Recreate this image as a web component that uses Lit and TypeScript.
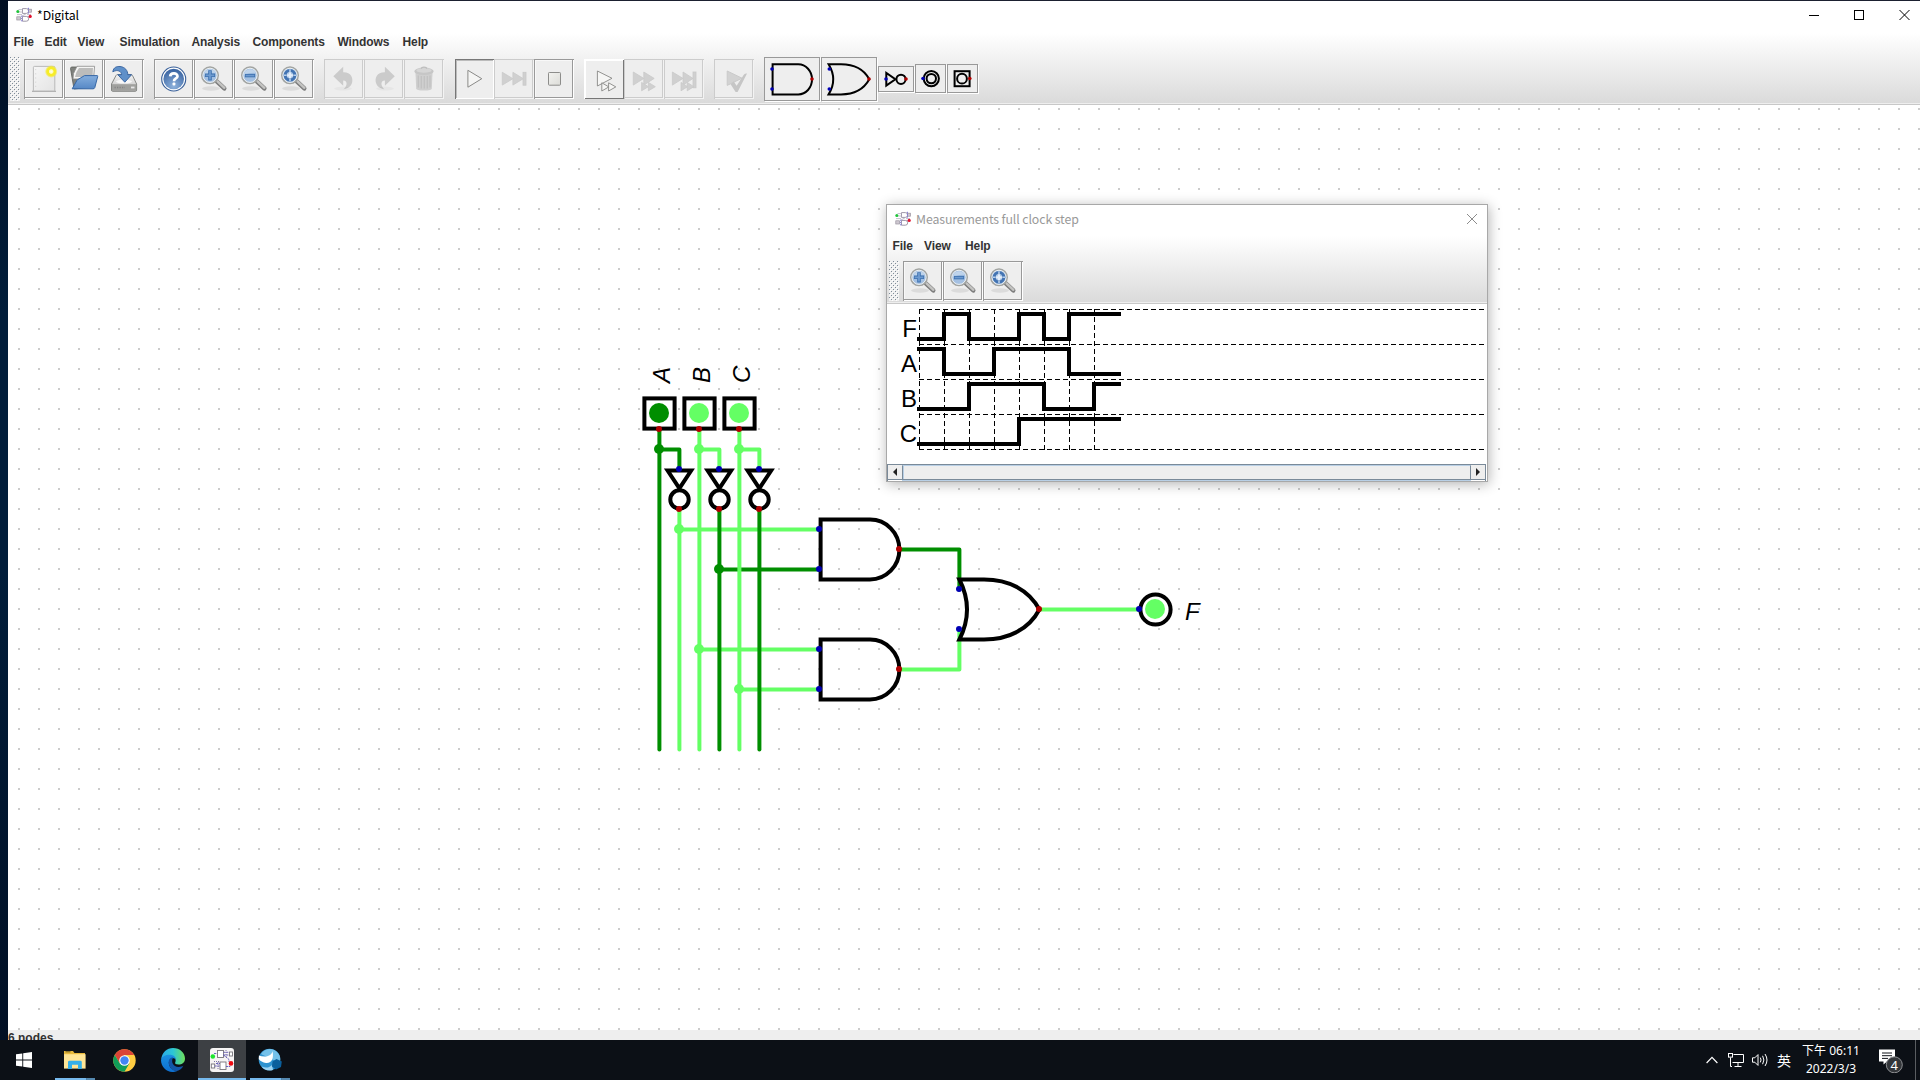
import { LitElement, html, svg, css, TemplateResult, SVGTemplateResult } from "lit";
import { customElement, property } from "lit/decorators.js";

type Menu = { label: string; width: number };
type Tool = { icon: string; state?: "disabled" | "pressed" | "raised" };

const MAIN_MENU: Menu[] = [
  { label: "File", width: 31 },
  { label: "Edit", width: 33 },
  { label: "View", width: 42 },
  { label: "Simulation", width: 72 },
  { label: "Analysis", width: 61 },
  { label: "Components", width: 85 },
  { label: "Windows", width: 65 },
  { label: "Help", width: 30 },
];

const MEASURE_MENU: Menu[] = [
  { label: "File", width: 31.5 },
  { label: "View", width: 41 },
  { label: "Help", width: 30 },
];

const TOOL_GROUPS: Tool[][] = [
  [{ icon: "new" }, { icon: "open" }, { icon: "save" }],
  [{ icon: "help" }, { icon: "zoomIn" }, { icon: "zoomOut" }, { icon: "zoomFit" }],
  [
    { icon: "undo", state: "disabled" },
    { icon: "redo", state: "disabled" },
    { icon: "trash", state: "disabled" },
  ],
  [{ icon: "play", state: "pressed" }, { icon: "skip", state: "disabled" }, { icon: "stop" }],
  [
    { icon: "step", state: "raised" },
    { icon: "fast", state: "disabled" },
    { icon: "fastEnd", state: "disabled" },
  ],
  [{ icon: "check", state: "disabled" }],
];

const magnifier = (mark: SVGTemplateResult) => svg`
  <ellipse cx="17" cy="29.5" rx="9" ry="2.2" fill="#000" opacity=".08"></ellipse>
  <path d="M22.5 22.2 L30.3 29.4" stroke="#7e7e7e" stroke-width="4.4" stroke-linecap="round"></path>
  <path d="M23.5 22.3 L30.4 28.8" stroke="#c4c4c2" stroke-width="2.4" stroke-linecap="round"></path>
  <circle cx="16" cy="16.3" r="8.2" fill="#a4c0e2" stroke="#a2a4a1" stroke-width="1.6"></circle>
  <circle cx="16" cy="16.3" r="7.1" fill="none" stroke="#eef1f2" stroke-width="1"></circle>
  <path d="M9.8 15 A6.5 6.5 0 0 1 22 14 Q15 13 9.8 17Z" fill="#c5d8ee" opacity=".8"></path>
  ${mark}`;

const ICONS: Record<string, SVGTemplateResult> = {
  new: svg`
    <defs>
      <linearGradient id="pg" x1="0" y1="0" x2="1" y2="1"><stop offset="0" stop-color="#f6f6f6"/><stop offset="1" stop-color="#e4e4e4"/></linearGradient>
      <radialGradient id="sun"><stop offset="0" stop-color="#fffef0"/><stop offset=".3" stop-color="#fffbb0"/><stop offset=".42" stop-color="#f8ee20"/><stop offset=".7" stop-color="#f5ea30"/><stop offset="1" stop-color="#f5ea30" stop-opacity="0"/></radialGradient>
    </defs>
    <path d="M8 32.3H32" stroke="#000" opacity=".25" stroke-width="1.4"></path>
    <rect x="9.4" y="7.4" width="21.4" height="24.6" rx="1" fill="url(#pg)" stroke="#b4b4b4" stroke-width=".9"></rect>
    <path d="M11.7 10v20" stroke="#cfcfcf" stroke-width=".8" stroke-dasharray="1.2 3"></path>
    <circle cx="27.2" cy="12.5" r="6.4" fill="url(#sun)"></circle>`,
  open: svg`
    <defs><linearGradient id="fo" x1="0" y1="0" x2="0" y2="1"><stop offset="0" stop-color="#85aedd"/><stop offset="1" stop-color="#5688c6"/></linearGradient></defs>
    <path d="M6.5 9.5 Q6.5 8 8 8H14l2 2.3H28V28L10 30Z" fill="#80827e" stroke="#5b5d59" stroke-width=".8"></path>
    <path d="M9.5 14.5 L13 7.3H30.6L29.5 20H9Z" fill="#f4f4f3" stroke="#8b8b8b" stroke-width=".8"></path>
    <path d="M12.5 13 L15 9H29L28.5 18H11Z" fill="#bcbcbb"></path>
    <path d="M8.2 29.8 L13 21.3 Q13.6 20.3 15 19.9L20.5 16.6H33.2Q34 16.6 33.7 17.5L30.8 28.6Q30.4 29.8 29 29.8Z" fill="url(#fo)" stroke="#3566a5" stroke-width="1"></path>`,
  save: svg`
    <defs><linearGradient id="dk" x1="0" y1="0" x2="0" y2="1"><stop offset="0" stop-color="#f4f4f4"/><stop offset="1" stop-color="#bcbcbc"/></linearGradient></defs>
    <path d="M7.5 25 L12 16.5Q12.5 15.6 13.5 15.6H27Q28 15.6 28.5 16.5L32.6 25V31Q32.6 32.3 31.3 32.3H8.7Q7.5 32.3 7.5 31Z" fill="url(#dk)" stroke="#7b7d79" stroke-width=".9"></path>
    <path d="M8 25.2H32.2V31.8H8Z" fill="#a0a19e"></path>
    <path d="M10.5 28.5H21" stroke="#858585" stroke-width="1.6" stroke-dasharray="1.3 1.2"></path>
    <path d="M27 28.5H30.5" stroke="#e5e5e5" stroke-width="1.8"></path>
    <ellipse cx="20" cy="22.6" rx="8" ry="2" fill="#fff" opacity=".8"></ellipse>
    <path d="M8.8 12.8 C9.5 8 13 7.3 16 7.5 C21 8 23.8 11.5 23.8 15.7H27.6L20.8 23.2L13.8 15.7H17.6C17.4 12.5 14 10 8.8 12.8Z" fill="#5f90c9" stroke="#34609c" stroke-width=".9"></path>`,
  help: svg`
    <defs><radialGradient id="hp" cx=".5" cy=".85" r=".8"><stop offset="0" stop-color="#8fb2dc"/><stop offset="1" stop-color="#3a65a3"/></radialGradient></defs>
    <circle cx="19.7" cy="20" r="12" fill="#fff" stroke="#39609a" stroke-width="1.1"></circle>
    <circle cx="19.7" cy="20" r="10.3" fill="url(#hp)"></circle>
    <path d="M16.2 17.4C16.3 13.5 23.5 13.3 23.5 17.2C23.5 19.6 20 19.3 20 22.2" fill="none" stroke="#fff" stroke-width="2.7"></path>
    <rect x="18.5" y="23.6" width="2.9" height="2.8" rx="1" fill="#fff"></rect>`,
  zoomIn: magnifier(svg`<path d="M16 11.2v10.2M10.9 16.3h10.2" stroke="#3f72b0" stroke-width="3.6"></path><path d="M16 12v8.6M11.7 16.3h8.6" stroke="#6e9bd0" stroke-width="1.8"></path>`),
  zoomOut: magnifier(svg`<path d="M10.9 16.6h10.2" stroke="#3f72b0" stroke-width="3.4"></path><path d="M11.7 16.6h8.6" stroke="#6e9bd0" stroke-width="1.6"></path>`),
  zoomFit: magnifier(svg`<circle cx="16" cy="16.3" r="4.8" fill="none" stroke="#4374b3" stroke-width="3"></circle><path d="M16 10.3v2.6M16 19.7v2.6M10 16.3h2.6M19.4 16.3h2.6" stroke="#b8cfea" stroke-width="1.6"></path><path d="M16 13.4v5.8M13.1 16.3h5.8" stroke="#e4eefa" stroke-width="2.2"></path>`),
  undo: svg`<path d="M9.3 17.3 L19.2 7.8V13.2C27 13 29.5 19 28 24C26.8 27.5 23.5 29.8 19.5 30.3C23 27.5 24.3 21.8 19.2 21.5V26.8Z" fill="#cbcbcb"></path><ellipse cx="19" cy="29.6" rx="9" ry="2" fill="#000" opacity=".03"></ellipse>`,
  redo: svg`<path d="M30.8 17.3 L20.9 7.8V13.2C13 13 10.5 19 12 24C13.2 27.5 16.5 29.8 20.5 30.3C17 27.5 15.8 21.8 20.9 21.5V26.8Z" fill="#cbcbcb"></path><ellipse cx="21" cy="29.6" rx="9" ry="2" fill="#000" opacity=".03"></ellipse>`,
  trash: svg`
    <path d="M11.5 14H28.5L27.8 29.5Q27.6 31.6 20 31.6Q12.4 31.6 12.2 29.5Z" fill="#cfcfcf"></path>
    <path d="M14.2 16.5v12M17.2 17v12.5M20.2 17v12.5M23.2 17v12.5M26 16.5v12" stroke="#bdbdbd" stroke-width="1"></path>
    <ellipse cx="20" cy="12.3" rx="9.7" ry="3.7" fill="#c6c6c6"></ellipse>
    <ellipse cx="20" cy="11.4" rx="7.6" ry="2.4" fill="#d6d6d6"></ellipse>
    <path d="M17.3 9.8Q17.5 8.2 20 8.2Q22.5 8.2 22.7 9.8" fill="none" stroke="#bdbdbd" stroke-width="1.2"></path>`,
  play: svg`<path d="M13.9 11.3V28.2L27.8 19.7Z" fill="#f5f5f4" stroke="#8a8a88" stroke-width="1"></path>`,
  skip: svg`<g fill="#d0d0d0" stroke="#c9c9c9" stroke-width=".8"><path d="M8.3 13.3V26.1L18.9 19.7Z"></path><path d="M18.9 13.3V26.1L29.3 19.7Z"></path><rect x="29" y="13.3" width="3" height="12.9"></rect></g>`,
  stop: svg`<defs><linearGradient id="st" x1="0" y1="0" x2="1" y2="1"><stop offset="0" stop-color="#f3f3f0"/><stop offset="1" stop-color="#dcdcd8"/></linearGradient></defs><rect x="14.5" y="13.5" width="12" height="12.7" rx=".8" fill="url(#st)" stroke="#8d8d8b" stroke-width="1"></rect>`,
  step: svg`<g fill="#f6f6f5" stroke="#888886" stroke-width=".9"><path d="M13.4 12V27L28 19.3Z"></path><path d="M17.8 23.8V32L24.8 27.9Z"></path><path d="M24.6 23.8V32L31.8 27.9Z"></path></g>`,
  fast: svg`<g fill="#d0d0d0" stroke="#c9c9c9" stroke-width=".8"><path d="M9.3 13V26.1L19.8 19.4Z"></path><path d="M19.8 13V26.1L30.2 19.4Z"></path><path d="M17.6 23.4V31.8L24.4 27.7Z"></path><path d="M24.4 23.4V31.8L31.3 27.7Z"></path></g>`,
  fastEnd: svg`<g fill="#d0d0d0" stroke="#c9c9c9" stroke-width=".8"><path d="M8.4 13V26.1L19 19.4Z"></path><path d="M19 13V26.1L29 19.4Z"></path><rect x="29" y="13" width="3" height="15.8"></rect><path d="M17 23.4V31.8L23.6 27.7Z"></path><path d="M23.2 23.4V31.8L29.8 27.7Z"></path></g>`,
  check: svg`<path d="M13.2 12V26.4L28 19.2Z" fill="#d2d2d2" stroke="#cacaca"></path><path d="M16.6 25.3L19.8 22.4L22.6 26.8L29.8 15.8Q31 14.4 33 14.6L23.6 33H21.6Z" fill="#c6c6c6"></path>`,
};

const appLogo = svg`
  <g fill="#fff" stroke="#9f98a8" stroke-width="1"><path d="M6.5 1.6h3.8a2.4 2.4 0 0 1 0 4.8H6.5Z"></path><path d="M6.5 9.4h3.8a2.4 2.4 0 0 1 0 4.8H6.5Z"></path></g>
  <rect x=".8" y="9.8" width="3.8" height="3.2" fill="#cfc9d2" stroke="#98929e" stroke-width=".7"></rect>
  <rect x="12.4" y="2.2" width="3" height="3" fill="#cfc9d2" stroke="#98929e" stroke-width=".7"></rect>
  <path d="M2 5H7M2.5 2.6H6.5M10 6.8L6 9M11 9.6H14M4.5 11.5H7M1 7.6H6M11 7.6H15" stroke="#b3aebf" stroke-width=".8"></path>
  <path d="M12.4 .8v6" stroke="#7d76d8" stroke-width="1" stroke-dasharray="1.4 .8"></path>
  <path d="M5.8 8.6v6" stroke="#7d76d8" stroke-width="1" stroke-dasharray="1.4 .8"></path>
  <circle cx="1.8" cy="4.6" r="1.5" fill="#1fc43a"></circle><circle cx="14.2" cy="9.4" r="1.6" fill="#e31230"></circle>`;

const logo = () => html`<svg class="logo" width="16" height="16" viewBox="0 0 16 16">${appLogo}</svg>`;

/* Drag handle at the left end of a tool bar: a staggered grid of single-pixel dots. */
const grip = (height: number) => html`<svg class="grip" width="10" height=${height} shape-rendering="crispEdges">
  <defs><pattern id="bumps" width="4" height="4" patternUnits="userSpaceOnUse">
    <rect width="4" height="4" fill="#f0f0f0"></rect>
    <rect width="1" height="1" fill="#7f8c99"></rect><rect x="2" y="2" width="1" height="1" fill="#7f8c99"></rect>
    <rect x="1" y="1" width="1" height="1" fill="#fff"></rect><rect x="3" y="3" width="1" height="1" fill="#fff"></rect>
  </pattern></defs>
  <rect width="10" height=${height} fill="url(#bumps)"></rect></svg>`;

@customElement("tool-button")
class ToolButton extends LitElement {
  @property() icon = "";
  @property() mode = "";
  static styles = css`
    :host { display: block; width: 40px; height: 40px; }
    .box { box-sizing: border-box; width: 40px; height: 40px; border: 1px solid #999; border-right: 0; border-bottom: 0; background: #eee; box-shadow: inset -1px -1px #fff, inset -2px -2px #999, inset 1px 1px #f8f8f8; }
    .disabled { border-color: #ccc; box-shadow: inset -1px -1px #f3f3f3, inset -2px -2px #ccc; }
    .pressed { width: 39px; margin-left: 1px; border-color: #777; box-shadow: inset -1px -1px #fff, inset 1px 1px #bbb; }
    .pressed svg { margin-left: -2px; }
    .raised { border-color: #fff; box-shadow: inset -1px -1px #777, inset 1px 1px #fff; }
    svg { display: block; margin: -1px 0 0 -1px; }
  `;
  render() {
    return html`<div class="box ${this.mode}"><svg width="39" height="39" viewBox="0 0 39 39" fill="none">${ICONS[this.icon]}</svg></div>`;
  }
}

@customElement("menu-bar")
class MenuBar extends LitElement {
  @property({ attribute: false }) items: Menu[] = [];
  static styles = css`
    :host { display: flex; padding-left: 5.5px; height: 22px; font: bold 12px/22px "Liberation Sans", Arial, sans-serif; color: #333; }
    span { white-space: nowrap; letter-spacing: -0.1px; }
  `;
  render() {
    return this.items.map((m) => html`<span style="width:${m.width}px">${m.label}</span>`);
  }
}

const RED = "#b00000";
const BLUE = "#0000b4";
const DARK = "#008e00";
const LIGHT = "#64ff64";

const pin = (x: number, y: number, color: string, r = 3) => svg`<circle cx=${x} cy=${y} r=${r} fill=${color}></circle>`;
const wire = (d: string, color: string) =>
  svg`<path d=${d} fill="none" stroke=${color} stroke-width="4" stroke-linecap="round" stroke-linejoin="round" transform="translate(.4 .4)"></path>`;

@customElement("circuit-view")
class CircuitView extends LitElement {
  static styles = css`
    :host { display: block; background: #fff; overflow: hidden; }
    svg { display: block; }
    text { font: italic 24px "Liberation Sans", Arial, sans-serif; fill: #000; }
  `;

  private input(x: number, label: string, color: string) {
    return svg`
      <rect x=${x - 14.6} y="398.4" width="30.2" height="30.2" fill="none" stroke="#000" stroke-width="4"></rect>
      <circle cx=${x} cy="413" r="10" fill=${color}></circle>
      ${pin(x, 429, RED)}
      <text transform="translate(${x + 11} 383) rotate(-90)">${label}</text>`;
  }

  private inverter(x: number) {
    return svg`
      <g fill="none" stroke="#000" stroke-width="4">
        <path d="M${x - 11.4} 470.5H${x + 12.2}L${x + 0.4} 488.4Z"></path>
        <circle cx=${x + 0.5} cy="499.5" r="9.2"></circle>
      </g>
      ${pin(x, 469, BLUE)}${pin(x, 509, RED)}`;
  }

  private and(y: number) {
    return svg`
      <path d="M870 ${y}H820.6V${y + 60}H870A29.4 30 0 0 0 870 ${y}Z" fill="none" stroke="#000" stroke-width="4"></path>
      ${pin(819, y + 9.5, BLUE)}${pin(819, y + 49.5, BLUE)}${pin(899, y + 29.5, RED)}`;
  }

  render() {
    return html`<svg width="1912" height="925" viewBox="8 105 1912 925">
      <defs><pattern id="grid" x="18" y="108" width="20" height="20" patternUnits="userSpaceOnUse"><rect width="2" height="2" fill="#ccc"></rect></pattern></defs>
      <rect x="8" y="105" width="1912" height="925" fill="url(#grid)"></rect>
      ${wire("M679 529H819", LIGHT)}${wire("M719 569H819", DARK)}${wire("M699 649H819", LIGHT)}${wire("M739 689H819", LIGHT)}
      ${wire("M659 429V749", DARK)}${wire("M679 509V749", LIGHT)}${wire("M699 429V749", LIGHT)}
      ${wire("M719 509V749", DARK)}${wire("M739 429V749", LIGHT)}${wire("M759 509V749", DARK)}
      ${wire("M659 449H679V469", DARK)}${wire("M699 449H719V469", LIGHT)}${wire("M739 449H759V469", LIGHT)}
      ${wire("M899 549H959V589", DARK)}${wire("M899 669H959V629", LIGHT)}${wire("M1039 609H1139", LIGHT)}
      ${pin(659, 449, DARK, 5)}${pin(699, 449, LIGHT, 5)}${pin(739, 449, LIGHT, 5)}
      ${pin(679, 529, LIGHT, 5)}${pin(719, 569, DARK, 5)}${pin(699, 649, LIGHT, 5)}${pin(739, 689, LIGHT, 5)}
      ${this.input(659, "A", DARK)}${this.input(699, "B", LIGHT)}${this.input(739, "C", LIGHT)}
      ${this.inverter(679)}${this.inverter(719)}${this.inverter(759)}
      ${this.and(519.5)}${this.and(639.5)}
      <path d="M959.4 579.5H984C1009 579.5 1029 590 1039.4 609.5C1029 629 1009 639.5 984 639.5H959.4C969.3 620 969.3 599 959.4 579.5Z" fill="none" stroke="#000" stroke-width="4"></path>
      ${pin(959, 589, BLUE)}${pin(959, 629, BLUE)}${pin(1039, 609, RED)}
      <circle cx="1155.5" cy="609.5" r="15.1" fill="#fff" stroke="#000" stroke-width="4"></circle>
      ${pin(1155, 609, LIGHT, 10)}${pin(1139, 609, BLUE)}
      <text x="1185" y="620">F</text>
    </svg>`;
  }
}

type Trace = { name: string; levels: number[] };

/* One entry per 25px clock step, starting at the left edge of the plot. */
const TRACES: Trace[] = [
  { name: "F", levels: [0, 1, 0, 0, 1, 0, 1, 1] },
  { name: "A", levels: [1, 0, 0, 1, 1, 1, 0, 0] },
  { name: "B", levels: [0, 0, 1, 1, 1, 0, 0, 1] },
  { name: "C", levels: [0, 0, 0, 0, 1, 1, 1, 1] },
];

@customElement("measure-window")
class MeasureWindow extends LitElement {
  static styles = css`
    :host { box-sizing: border-box; display: flex; flex-direction: column; width: 602px; height: 278px; border: 1px solid #a8a8a8; background: #fff; box-shadow: 1px 2px 12px rgba(0, 0, 0, 0.3); }
    .title { display: flex; align-items: center; height: 28px; padding: 0 10px 0 8px; font: 12.3px "Noto Sans CJK TC", "Noto Sans", sans-serif; color: #999; }
    .title span { margin-left: 5px; flex: 1; letter-spacing: -0.1px; }
    .head { height: 70px; background: linear-gradient(#fff 3px, #dadada); border-bottom: 1px solid #c8c8c8; box-shadow: inset 0 -1px #eee; }
    menu-bar { padding-top: 2px; }
    .tools { display: flex; align-items: center; height: 42px; padding: 3px 0 0 2px; }
    .grip { display: block; margin-right: 4px; }
    .plot { display: block; }
    .plot text { font: 24px "Liberation Sans", Arial, sans-serif; }
    .scroll { box-sizing: border-box; display: flex; width: 599px; height: 17px; border: 1px solid #7a8a99; border-bottom: 0; }
    .scroll div { box-sizing: border-box; height: 15px; background: #eee; border-bottom: 1px solid #7a8a99; display: flex; align-items: center; justify-content: center; }
    .scroll .arrow { width: 14px; }
    .scroll .thumb { flex: 1; border: 1px solid #7a8a99; border-top-color: #b8cfe5; box-shadow: inset 1px 0 #b8cfe5, 0 1px #b8cfe5; }
  `;

  private trace(t: Trace, row: number) {
    const y = (v: number) => 339 - 25 * v + row * 35;
    let d = `M917 ${y(t.levels[0])}`;
    t.levels.forEach((v, i) => {
      if (i) d += `H${919 + 25 * i}V${y(v)}`;
    });
    return svg`<path d="${d}H1121" fill="none" stroke="#000" stroke-width="4"></path>
      <text x="917" text-anchor="end" y=${337 + row * 35}>${t.name}</text>`;
  }

  render(): TemplateResult {
    return html`
      <div class="title">${logo()}<span>Measurements full clock step</span>
        <svg width="10" height="10" viewBox="0 0 10 10"><path d="M0 0L10 10M10 0L0 10" stroke="#8c8c8c" stroke-width="1"></path></svg>
      </div>
      <div class="head">
        <menu-bar .items=${MEASURE_MENU}></menu-bar>
        <div class="tools">${grip(40)}${["zoomIn", "zoomOut", "zoomFit"].map((i) => html`<tool-button icon=${i}></tool-button>`)}</div>
      </div>
      <svg class="plot" width="600" height="160" viewBox="887 304 600 160">
        ${[0, 1, 2, 3, 4].map((i) => svg`<path d="M919 ${309.5 + 35 * i}H1484" stroke="#000" stroke-dasharray="5 3"></path>`)}
        ${[0, 1, 2, 3, 4, 5, 6, 7].map((i) => svg`<path d="M${919.5 + 25 * i} 309V450" stroke="#000" stroke-dasharray="5 3"></path>`)}
        ${TRACES.map((t, i) => this.trace(t, i))}
      </svg>
      <div class="scroll">
        <div class="arrow"><svg width="4" height="8"><path d="M4 0V8L0 4Z" fill="#222"></path></svg></div>
        <div class="thumb"></div>
        <div class="arrow"><svg width="4" height="8"><path d="M0 0V8L4 4Z" fill="#222"></path></svg></div>
      </div>`;
  }
}

@customElement("task-bar")
class TaskBar extends LitElement {
  static styles = css`
    :host { display: flex; height: 40px; background: #0c1016; color: #fff; font: 12px "Noto Sans", "Noto Sans CJK TC", sans-serif; }
    .slot { box-sizing: border-box; display: flex; align-items: center; justify-content: center; width: 48px; height: 40px; margin-right: 1px; }
    .slot.first { margin-right: 3px; }
    .slot.run { background: linear-gradient(90deg, #76b9ed 31px, #44789f 31px, #5589b0 32px, #5589b0 40px, transparent 40px) 4px 38px / 40px 2px no-repeat; }
    .slot.active { margin-right: 0; background: linear-gradient(#76b9ed, #76b9ed) 0 38px / 48px 2px no-repeat #3d4044; }
    .slot.plain { margin-right: 1px; }
    .space { flex: 1; }
    .tray { display: flex; align-items: center; }
    .tray svg { display: block; }
    .chev { margin-right: 10px; }
    .net { margin-right: 8px; }
    .vol { margin-right: 8px; }
    .ime { width: 15px; font: 14px/40px "Noto Sans CJK TC", sans-serif; }
    .clock { width: 78px; text-align: center; line-height: 18px; padding-bottom: 1px; }
    .note { margin-left: 9px; }
    .note text { font: 13px "Noto Sans", sans-serif; fill: #fff; }
    .edge { width: 1px; height: 40px; margin: 0 4px 0 10px; background: #5a5d61; }
  `;
  render() {
    return html`
      <div class="slot first"><svg width="16" height="16" viewBox="0 0 16 16" fill="#fff"><path d="M0 2.3L6.3 1.4V7.5H0ZM7.2 1.2L16 0V7.5H7.2ZM0 8.4H6.3V14.6L0 13.7ZM7.2 8.4H16V16L7.2 14.8Z"></path></svg></div>
      <div class="slot run"><svg width="22" height="20" viewBox="0 0 22 20"><path d="M0 1h9l1.5 2H21v15H0Z" fill="#e8b93c"></path><path d="M1.5 1.8h5" stroke="#6b5a20"></path><path d="M0 4.2H21.6V18.6H0Z" fill="#ffe596"></path><path d="M4 19V12.2Q4 10.8 5.4 10.8H16.4Q17.8 10.8 17.8 12.2V19H14V14.8H8V19Z" fill="#35b0ea"></path></svg></div>
      <div class="slot"><svg width="23" height="23" viewBox="-11.5 -11.5 23 23">
        <circle r="11.2" fill="#ffcd42"></circle>
        <path d="M-9.7 -5.6A11.2 11.2 0 0 1 9.7 -5.6H0L-4.8 2.8Z" fill="#db4437"></path>
        <path d="M-9.7 -5.6A11.2 11.2 0 0 0 0 11.2L4.9 2.7L-4.8 2.8Z" fill="#109d58"></path>
        <circle r="5.3" fill="#fff"></circle><circle r="4.2" fill="#4285f4"></circle></svg></div>
      <div class="slot"><svg width="24" height="24" viewBox="0 0 24 24">
        <defs>
          <linearGradient id="eg" x1="0" y1=".4" x2="1" y2=".4"><stop offset="0" stop-color="#2aa8e8"/><stop offset=".5" stop-color="#2cc6d6"/><stop offset="1" stop-color="#6fe05a"/></linearGradient>
          <linearGradient id="eb" x1="0" y1="0" x2="0" y2="1"><stop offset="0" stop-color="#1a8fe0"/><stop offset="1" stop-color="#0d6fd0"/></linearGradient>
        </defs>
        <path d="M0 12C1 4 6 0 12 0C19 0 24 5 24 10.5C24 14.5 21 16.6 17.5 16.6C15 16.6 13.6 15.8 14.2 14.6C15.6 12 14 7.6 9 7.6C4.5 7.6 1 9.5 0 12Z" fill="url(#eg)"></path>
        <path d="M0 12C1 8.4 4.5 6.8 8.4 6.8C12.5 6.8 15 9 15 11.8C13.5 9 7.5 10 7.8 15C8 19.5 12 23 17 22.8C10 26.5 0 21.5 0 12Z" fill="url(#eb)"></path>
        <path d="M7.8 15C7.4 11.5 9.5 9.5 12 9.3C9.8 14 12 19 17.5 19C19.8 19 21.3 18.4 22.4 17.8C20.8 21 18 23 15.5 23C11.5 23 8.2 19.5 7.8 15Z" fill="#1356a8"></path></svg></div>
      <div class="slot active"><svg width="24" height="24" viewBox="0 0 24 24">
        <rect width="24" height="24" rx="3" fill="#f6f4f4"></rect>
        <g fill="#fff" stroke="#77737a" stroke-width=".9"><rect x="7.5" y="2.5" width="6" height="7"></rect><rect x="10" y="14" width="6" height="7.5"></rect><rect x="19.5" y="4" width="3" height="4"></rect><rect x="1.3" y="16" width="3.4" height="4"></rect></g>
        <path d="M4 5.5H7M13.5 4.3H19M13.5 7H19M13.5 7L19 11.5V14M4.7 18H10M6 15.5H10M16 18.5H20V15" fill="none" stroke="#5c54b8" stroke-width=".9" stroke-dasharray="2 .7"></path>
        <path d="M16 2v7M8 14v8M4 13.5h6" stroke="#6f659b" stroke-width=".9" stroke-dasharray="1 1"></path>
        <circle cx="2.8" cy="8.5" r="2.3" fill="#1ee62e"></circle><circle cx="21" cy="15.4" r="2.3" fill="#f00b12"></circle></svg></div>
      <div class="space-slot"></div>
      <div class="slot run"><svg width="24" height="24" viewBox="0 0 24 24">
        <circle cx="11.5" cy="11.5" r="10.8" fill="#2f93d0"></circle>
        <path d="M3 6C7 0 15 -1 20 5C22.6 8 22.4 11 22 13.5C15 13 8 8 3 6Z" fill="#74c1ea"></path>
        <path d="M.9 7.5C6 9.5 13.5 9 14.5 3C16 10 14 15.5 8 15C5 14.6 2 13 .8 11Z" fill="#fff"></path>
        <path d="M3.5 18.5C8 20.5 12 19.5 14 17L15 22C10 23.5 6 22 3.5 18.5Z" fill="#9bd3f2"></path>
        <path d="M14.5 13.5L18.5 11L23.8 13.5L23 19L18 21.5L14 18.5Z" fill="#0b5f9c"></path></svg></div>
      <div class="space"></div>
      <div class="tray">
        <svg class="chev" width="12" height="8" viewBox="0 0 12 8"><path d="M.6 7L6 1.4L11.4 7" fill="none" stroke="#fff" stroke-width="1.2"></path></svg>
        <svg class="net" width="16" height="16" viewBox="0 0 16 16" fill="none" stroke="#fff"><path d="M5.5 2.5H15.5V10.5H4.5M10 10.5V14M6.5 14.5H13.5M2.5 5.5V14.5H4"></path><rect x=".5" y="1.5" width="4" height="3.6"></rect></svg>
        <svg class="vol" width="17" height="16" viewBox="0 0 17 16" fill="none" stroke="#fff"><path d="M.5 5.8H2.8L6 2.6V13.4L2.8 10.2H.5Z"></path><path d="M8.3 5.6Q9.8 8 8.3 10.4M10.6 3.8Q13.2 8 10.6 12.2M13 2Q17 8 13 14"></path></svg>
        <div class="ime">英</div>
        <div class="clock"><div>下午 06:11</div><div>2022/3/3</div></div>
        <svg class="note" width="26" height="26" viewBox="0 0 26 26"><path d="M0 2.5H16V14.5H8L4.5 17.5V14.5H0Z" fill="#fff"></path><path d="M3 6H13M3 8.7H13M3 11.4H9" stroke="#10141a"></path><circle cx="15.3" cy="17.8" r="8" fill="#33363a" stroke="#8e9093"></circle><text x="15.3" y="22.5" text-anchor="middle">4</text></svg>
        <div class="edge"></div>
      </div>`;
  }
}

@customElement("app-root")
class AppRoot extends LitElement {
  static styles = css`
    :host { position: relative; display: flex; flex-direction: column; width: 1920px; height: 1080px; overflow: hidden; background: #1a1e2b; }
    .desk { box-sizing: border-box; height: 1040px; padding: 1px 0 0 8px; background: linear-gradient(#1b2030, #1b2030) 8px 0 / 1912px 1px no-repeat, linear-gradient(#010e22, #011d3a 30%, #011d3a 55%, #010f24); overflow: hidden; }
    .win { display: flex; flex-direction: column; width: 1912px; height: 1039px; background: #fff; overflow: hidden; }
    .title { display: flex; align-items: center; box-sizing: border-box; height: 29px; padding: 0 10px 1px 8px; flex: none; font: 12.3px "Noto Sans CJK TC", "Noto Sans", sans-serif; color: #000; }
    .title span { flex: 1; margin-left: 5px; letter-spacing: -0.1px; }
    .ctl { display: flex; align-items: center; gap: 35px; }
    .ctl svg { display: block; }
    .head { flex: none; box-sizing: border-box; height: 75px; background: linear-gradient(#fff 3px, #dadada); border-bottom: 1px solid #c8c8c8; box-shadow: inset 0 -1px #eee; padding-top: 1px; }
    .tools { display: flex; align-items: center; height: 45px; padding: 3px 0 0 2px; }
    .grip { display: block; margin-right: 4px; }
    .group { display: flex; margin-right: 10px; }
    .parts { display: flex; align-items: center; }
    .part { box-sizing: border-box; border: 1px solid #999; background: #eee; box-shadow: 1px 1px #fff; margin-right: 1px; }
    .part svg { display: block; margin: -1px; }
    .status { flex: none; height: 20px; background: #eee; font: bold 12px/17px "Liberation Sans", Arial, sans-serif; color: #333; }
    circuit-view { flex: none; height: 925px; }
    measure-window { position: absolute; left: 886px; top: 204px; }
  `;

  private part(w: number, h: number, body: SVGTemplateResult) {
    return html`<div class="part"><svg width=${w} height=${h} viewBox="0 0 ${w} ${h}" fill="none" stroke="#000" stroke-width="2">${body}</svg></div>`;
  }

  render() {
    const dot = (x: number, y: number, c: string) => svg`<circle cx=${x} cy=${y} r="1.8" fill=${c} stroke="none"></circle>`;
    return html`
      <div class="desk">
        <div class="win">
          <div class="title">${logo()}<span>*Digital</span>
            <div class="ctl">
              <svg width="10" height="10"><path d="M0 5.5H10" stroke="#000"></path></svg>
              <svg width="10" height="10"><rect x=".5" y=".5" width="9" height="9" fill="none" stroke="#000"></rect></svg>
              <svg width="11" height="10"><path d="M.5 0L10.5 10M10.5 0L.5 10" stroke="#000"></path></svg>
            </div>
          </div>
          <div class="head">
            <menu-bar .items=${MAIN_MENU}></menu-bar>
            <div class="tools">
              ${grip(44)}
              ${TOOL_GROUPS.map((g) => html`<div class="group">${g.map((t) => html`<tool-button icon=${t.icon} mode=${t.state ?? ""}></tool-button>`)}</div>`)}
              <div class="parts">
                ${this.part(56, 44, svg`<path d="M34.3 7.3H8.6V37.4H34.3A13.7 15 0 0 0 34.3 7.3Z"></path>${dot(8, 12, BLUE)}${dot(8, 32, BLUE)}${dot(48, 22, RED)}`)}
                ${this.part(56, 44, svg`<path d="M7.6 7.3H20C33 7.3 43 12.5 48.3 22.3C43 32 33 37.4 20 37.4H7.6C13.5 28 13.5 17 7.6 7.3Z"></path>${dot(8.3, 12, BLUE)}${dot(8.3, 32, BLUE)}${dot(48, 22, RED)}`)}
                ${this.part(36, 26, svg`<path d="M8.3 7V19.6L17.4 13.3Z"></path><circle cx="23" cy="13.3" r="4.6"></circle>${dot(8, 13, BLUE)}${dot(28, 13, RED)}`)}
                ${this.part(31, 29, svg`<circle cx="16.3" cy="14.6" r="7.6"></circle><circle cx="16.3" cy="14.6" r="4.7"></circle>${dot(8, 14.5, BLUE)}`)}
                ${this.part(31, 29, svg`<rect x="7.6" y="7.2" width="15" height="15"></rect><circle cx="15" cy="14.7" r="4.9"></circle>${dot(22.8, 14.5, RED)}`)}
              </div>
            </div>
          </div>
          <circuit-view></circuit-view>
          <div class="status">6 nodes</div>
        </div>
      </div>
      <task-bar></task-bar>
      <measure-window></measure-window>`;
  }
}
